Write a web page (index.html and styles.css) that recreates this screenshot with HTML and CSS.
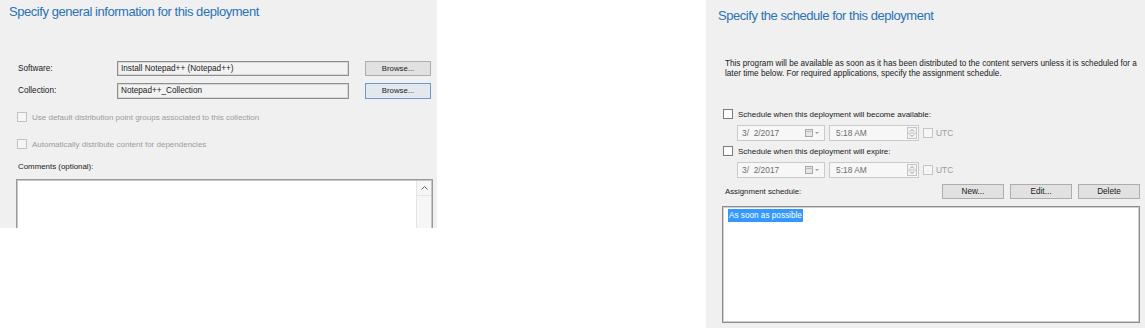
FILE: index.html
```html
<!DOCTYPE html>
<html>
<head>
<meta charset="utf-8">
<link rel="stylesheet" href="styles.css">
</head>
<body>
<div class="page">
  <section class="panel left">
    <h1 class="title">Specify general information for this deployment</h1>
    <div class="form">
      <div class="label">Software:</div>
      <div class="field">Install Notepad++ (Notepad++)</div>
      <div class="btn">Browse...</div>
      <div class="label tall">Collection:</div>
      <div class="field tall">Notepad++_Collection</div>
      <div class="btn focused">Browse...</div>
    </div>
    <div class="check disabled c1"><span class="box"></span><span>Use default distribution point groups associated to this collection</span></div>
    <div class="check disabled c2"><span class="box"></span><span>Automatically distribute content for dependencies</span></div>
    <div class="comments-label">Comments (optional):</div>
    <div class="textarea">
      <div class="ta-body"></div>
      <div class="scroll"><div class="up"><svg width="7" height="4" viewBox="0 0 7 4"><path d="M0.5 3.5 L3.5 0.5 L6.5 3.5" fill="none" stroke="#606060" stroke-width="1"/></svg></div></div>
    </div>
  </section>

  <section class="panel right">
    <h1 class="title rt">Specify the schedule for this deployment</h1>
    <p class="info">This program will be available as soon as it has been distributed to the content servers unless it is scheduled for a later time below. For required applications, specify the assignment schedule.</p>

    <div class="check sched s1"><span class="box"></span><span>Schedule when this deployment will become available:</span></div>
    <div class="dtrow">
      <div class="date"><span>3/&nbsp; 2/2017</span><span class="cal"><svg width="15" height="9" viewBox="0 0 15 9"><rect x="0.5" y="0.5" width="7" height="7" fill="#e6e6e6" stroke="#a8a8a8"/><path d="M1.5 2.5 H6.5" stroke="#b8b8b8"/><path d="M10 3 L12 5 L14 3 Z" fill="#a0a0a0"/></svg></span></div>
      <div class="time"><span>5:18 AM</span><span class="spin"><svg width="10" height="12" viewBox="0 0 10 12"><rect x="0.5" y="0.5" width="9" height="11" fill="#f4f4f4" stroke="#c4c4c4"/><path d="M0.5 6 H9.5" stroke="#c4c4c4"/><path d="M3 4.5 L5 2.5 L7 4.5" fill="none" stroke="#9a9a9a"/><path d="M3 7.5 L5 9.5 L7 7.5" fill="none" stroke="#9a9a9a"/></svg></span></div>
      <div class="utc"><span class="box"></span><span>UTC</span></div>
    </div>
    <div class="check sched s2"><span class="box"></span><span>Schedule when this deployment will expire:</span></div>
    <div class="dtrow">
      <div class="date"><span>3/&nbsp; 2/2017</span><span class="cal"><svg width="15" height="9" viewBox="0 0 15 9"><rect x="0.5" y="0.5" width="7" height="7" fill="#e6e6e6" stroke="#a8a8a8"/><path d="M1.5 2.5 H6.5" stroke="#b8b8b8"/><path d="M10 3 L12 5 L14 3 Z" fill="#a0a0a0"/></svg></span></div>
      <div class="time"><span>5:18 AM</span><span class="spin"><svg width="10" height="12" viewBox="0 0 10 12"><rect x="0.5" y="0.5" width="9" height="11" fill="#f4f4f4" stroke="#c4c4c4"/><path d="M0.5 6 H9.5" stroke="#c4c4c4"/><path d="M3 4.5 L5 2.5 L7 4.5" fill="none" stroke="#9a9a9a"/><path d="M3 7.5 L5 9.5 L7 7.5" fill="none" stroke="#9a9a9a"/></svg></span></div>
      <div class="utc"><span class="box"></span><span>UTC</span></div>
    </div>

    <div class="assign">
      <div class="assign-label">Assignment schedule:</div>
      <div class="btns">
        <div class="btn sm">New...</div>
        <div class="btn sm">Edit...</div>
        <div class="btn sm">Delete</div>
      </div>
    </div>
    <div class="listbox">
      <span class="item">As soon as possible</span>
    </div>
  </section>
</div>
</body>
</html>
```

FILE: styles.css
```css
* { box-sizing: border-box; }
html, body { margin: 0; padding: 0; background: #ffffff; }
body { font-family: "Liberation Sans", Arial, sans-serif; color: #1a1a1a; }

.page { display: flex; align-items: flex-start; gap: 269px; width: 1145px; height: 328px; overflow: hidden; }

.panel { background: #f0f0f0; }
.left { width: 437px; height: 228px; overflow: hidden; }
.right { width: 439px; height: 328px; }

.title { margin: 0; font-weight: normal; color: #2b72b4; font-size: 13px; letter-spacing: -0.45px; line-height: 18px; }
.left .title { padding: 3px 0 0 9px; }
.right .title { padding: 7px 0 0 12px; }

/* left form */
.form { display: grid; grid-template-columns: 83px 232px 66px; column-gap: 16px; row-gap: 7px; padding: 40px 0 0 18px; font-size: 8.2px; }
.label { line-height: 15px; height: 15px; }
.label.tall { height: 16px; line-height: 16px; }
.field { height: 15px; border: 1px solid #8f8f8f; box-shadow: inset 0 0 0 1px #d8d8d8; background: #f2f2f2; padding-left: 3px; line-height: 13px; }
.field.tall { height: 16px; line-height: 14px; }
.btn { height: 15px; border: 1px solid #adadad; background: #e1e1e1; text-align: center; line-height: 13px; color: #1a1a1a; font-size: 7.8px; }
.btn.focused { height: 16px; border-color: #6a9bd0; background: #e3e8ee; line-height: 14px; }

.check { display: flex; align-items: center; gap: 5px; font-size: 8px; }
.check .box { width: 10px; height: 10px; border: 1px solid #8a8a8a; background: #ffffff; flex: none; }
.check.disabled { color: #9c9c9c; }
.check.disabled .box { border-color: #c2c2c2; background: #f6f6f6; }
.c1 { margin: 13px 0 0 17px; height: 10px; }
.c2 { margin: 17px 0 0 17px; height: 10px; }

.comments-label { font-size: 7.9px; margin: 12px 0 0 18px; line-height: 12px; }
.textarea { margin: 6px 0 0 16px; width: 417px; height: 80px; border: 1px solid #9a9a9a; box-shadow: inset 0 0 0 1px #c6c6c6; background: #ffffff; display: flex; }
.ta-body { flex: 1; }
.scroll { width: 15px; border-left: 1px solid #e4e4e4; margin: 1px 1px 0 0; background: #f6f6f6; }
.up { height: 15px; display: flex; align-items: center; justify-content: center; border-bottom: 1px solid #e6e6e6; }

/* right */
.info { margin: 34px 0 0 19px; font-size: 8.2px; line-height: 10px; width: 418px; color: #1a1a1a; }
.sched { font-size: 8px; margin-left: 17px; height: 10px; }
.s1 { margin-top: 30px; }
.s2 { margin-top: 5px; }
.sched .box { border-color: #7a7a7a; }

.dtrow { display: flex; align-items: center; margin: 6px 0 0 31px; height: 16px; font-size: 8.4px; color: #6d6d6d; }
.date { width: 88px; height: 16px; border: 1px solid #cacaca; background: #f7f7f7; display: flex; align-items: center; justify-content: space-between; padding: 0 4px 0 4px; }
.cal { display: flex; align-items: center; }
.time { margin-left: 4px; width: 90px; height: 16px; border: 1px solid #cacaca; background: #f7f7f7; display: flex; align-items: center; justify-content: space-between; padding: 0 1px 0 6px; }
.spin { display: flex; }
.utc { display: flex; align-items: center; gap: 3px; margin-left: 4px; color: #9c9c9c; }
.utc .box { width: 10px; height: 10px; border: 1px solid #c6c6c6; background: #f6f6f6; }

.assign { display: flex; align-items: center; justify-content: space-between; margin: 6px 5px 0 19px; height: 15px; font-size: 7.8px; }
.btns { display: flex; gap: 6px; }
.btn.sm { width: 62px; height: 15px; line-height: 13px; font-size: 8.2px; background: #e1e1e1; border-color: #adadad; }

.listbox { margin: 7px 5px 0 16px; height: 117px; border: 1px solid #8c8c8c; box-shadow: inset 0 0 0 1px #cfcfcf; background: #ffffff; padding: 2px 0 0 5px; font-size: 8.2px; }
.item { display: inline-block; background: #3399ff; color: #ffffff; padding: 0 1px; line-height: 13px; height: 13px; }
```
